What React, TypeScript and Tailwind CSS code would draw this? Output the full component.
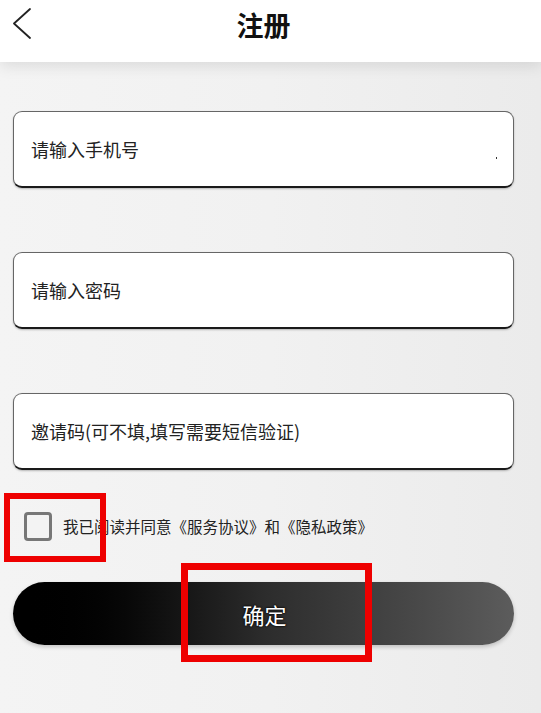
import React from "react";

const font = { fontFamily: '"Noto Sans CJK SC", "Noto Sans", sans-serif' };

function Field({ text, dot }: { text: string; dot?: boolean }) {
  return (
    <div className="relative h-[77px] flex items-center rounded-[9px] bg-white border-[1.5px] border-[#666] border-b-[2.5px] border-b-[#1a1a1a] shadow-[0_1px_2px_rgba(0,0,0,0.25)] pl-[17px]">
      <span className="text-[18px] text-[#222] leading-none">{text}</span>
      {dot && <span className="absolute right-[16px] top-[45px] w-[1.5px] h-[1.5px] bg-[#333]" />}
    </div>
  );
}

export default function App() {
  return (
    <div style={font} className="relative w-[541px] h-[713px] overflow-hidden bg-gradient-to-r from-[#f4f4f4] via-[#f1f1f1] to-[#ebebeb]">
      <header className="relative h-[62px] bg-white flex items-center justify-center shadow-[0_4px_14px_rgba(0,0,0,0.10)]">
        <svg className="absolute left-[12px] top-[8px]" width="20" height="31" viewBox="0 0 20 31" fill="none">
          <path d="M18 1 L2 15.5 L18 30" stroke="#222" strokeWidth="1.8" strokeLinecap="round" strokeLinejoin="round" />
        </svg>
        <h1 className="text-[27px] font-bold text-[#111] leading-none -mt-[14px] ml-[-14px]">注册</h1>
      </header>

      <main className="px-[13px] pr-[27px] pt-[49px] flex flex-col">
        <div className="flex flex-col gap-[64px]">
          <Field text="请输入手机号" dot />
          <Field text="请输入密码" />
          <Field text="邀请码(可不填,填写需要短信验证)" />
        </div>

        <div className="flex items-center mt-[42px] pl-[11px] gap-[11px]">
          <span className="w-[28px] h-[29px] rounded-[4px] border-[3px] border-[#777] bg-[#f3f3f3]" />
          <span className="text-[15.5px] text-[#222] leading-none">我已阅读并同意《服务协议》和《隐私政策》</span>
        </div>

        <button className="mt-[41px] h-[63px] w-full rounded-full bg-gradient-to-r from-[#000] via-[#2c2c2c] to-[#5c5c5c] flex items-center justify-center shadow-[0_2px_4px_rgba(0,0,0,0.2)]">
          <span className="text-[22px] text-white leading-none [text-shadow:0_0_2px_#000,0_0_2px_#000] ml-[2px]">确定</span>
        </button>
      </main>

      <div className="absolute left-[4px] top-[493px] w-[102px] h-[69px] border-[6px] border-[#ee0000]" />
      <div className="absolute left-[181px] top-[563px] w-[191px] h-[99px] border-[7px] border-[#ee0000]" />
    </div>
  );
}
